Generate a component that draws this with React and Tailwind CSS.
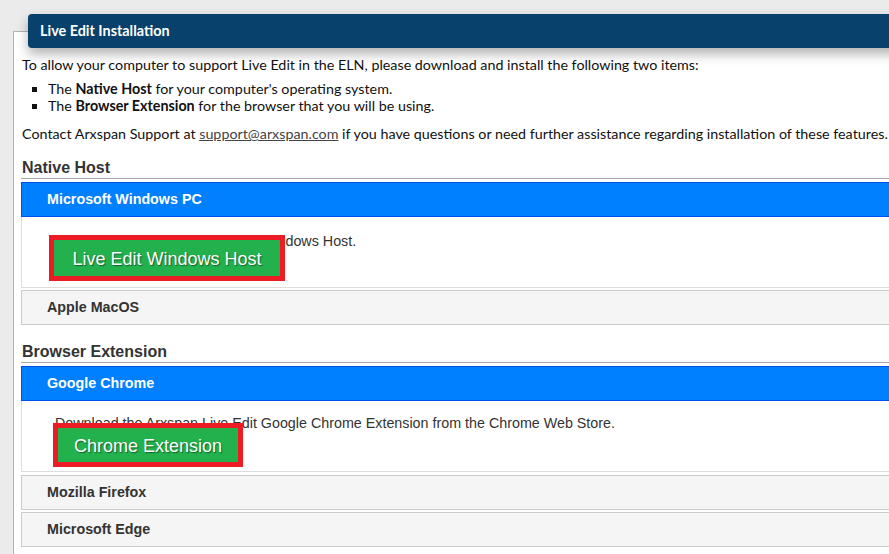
import React from 'react';

const arial = { fontFamily: '"Liberation Sans", Arial, sans-serif' };

function AccHeader({ title, active }) {
  return (
    <div
      style={arial}
      className={`flex h-[35px] items-center border pl-[25px] text-[14.3px] font-bold ${
        active
          ? 'border-[#0051e8] bg-[#007fff] text-white'
          : 'border-[#cccccc] bg-[#f5f5f5] text-[#333333]'
      }`}
    >
      {title}
    </div>
  );
}

function GreenButton({ label, className }) {
  return (
    <div className={`relative flex items-center justify-center border-[5px] border-[#ed1c24] ${className}`}>
      <div
        style={{ ...arial, textShadow: '1px 1px 1px rgba(0,0,0,0.45)' }}
        className="flex h-full w-full items-center justify-center bg-[#22b14c] pt-[2px] text-[18px] text-white"
      >
        {label}
      </div>
    </div>
  );
}

export default function App() {
  return (
    <div
      style={{ fontFamily: 'Lato, "Open Sans", sans-serif' }}
      className="h-[554px] w-[889px] overflow-hidden bg-[#ebebeb] pt-[14px]"
    >
      <div className="relative z-10 ml-[28px] flex h-[34px] w-[900px] items-center rounded-[4px] bg-[#08416b] pl-[12px] text-[14.4px] font-bold text-white shadow-[0_6px_12px_rgba(0,0,0,0.3)]">
        Live Edit Installation
      </div>

      <div className="-mt-[17px] ml-[13px] w-[920px] border border-[#b5b5b5] bg-white pl-[7px] pt-[23px] text-[14.3px] text-[#111111]">
        <p className="pl-[1px] leading-[20px]">
          To allow your computer to support Live Edit in the ELN, please download and install the following two items:
        </p>
        <ul className="mt-[5px] list-[square] pl-[27px] leading-[17px]">
          <li>
            The <b>Native Host</b> for your computer's operating system.
          </li>
          <li>
            The <b>Browser Extension</b> for the browser that you will be using.
          </li>
        </ul>
        <p className="mt-[10px] pl-[1px] leading-[20px]">
          Contact Arxspan Support at{' '}
          <span className="text-[#444] underline">support@arxspan.com</span> if you have questions or need further assistance regarding installation of these features.
        </p>

        <div
          style={arial}
          className="mt-[15px] border-b border-[#aaaaaa] pb-[1px] pl-[1px] text-[16px] font-bold leading-[18px] text-[#333333]"
        >
          Native Host
        </div>
        <div className="mt-[3px]">
          <AccHeader title="Microsoft Windows PC" active />
          <div className="border border-t-0 border-[#dddddd] pb-[6px] pl-[33px] pt-[14px]">
            <p style={arial} className="leading-[20px] text-[#333333]">
              Download the Arxspan Live Edit Windows Host.
            </p>
            <GreenButton label="Live Edit Windows Host" className="-ml-[6px] -mt-[16px] h-[46px] w-[236px]" />
          </div>
          <div className="mt-[2px]">
            <AccHeader title="Apple MacOS" />
          </div>
        </div>

        <div
          style={arial}
          className="mt-[18px] border-b border-[#aaaaaa] pb-[1px] pl-[1px] text-[16px] font-bold leading-[18px] text-[#333333]"
        >
          Browser Extension
        </div>
        <div className="mt-[3px]">
          <AccHeader title="Google Chrome" active />
          <div className="border border-t-0 border-[#dddddd] pb-[4px] pl-[33px] pt-[12px]">
            <p style={arial} className="leading-[20px] text-[#333333]">
              Download the Arxspan Live Edit Google Chrome Extension from the Chrome Web Store.
            </p>
            <GreenButton label="Chrome Extension" className="-ml-[2px] -mt-[10px] h-[44px] w-[190px]" />
          </div>
          <div className="mt-[3px]">
            <AccHeader title="Mozilla Firefox" />
          </div>
          <div className="mt-[2px]">
            <AccHeader title="Microsoft Edge" />
          </div>
        </div>
        <div className="h-[20px]" />
      </div>
    </div>
  );
}
